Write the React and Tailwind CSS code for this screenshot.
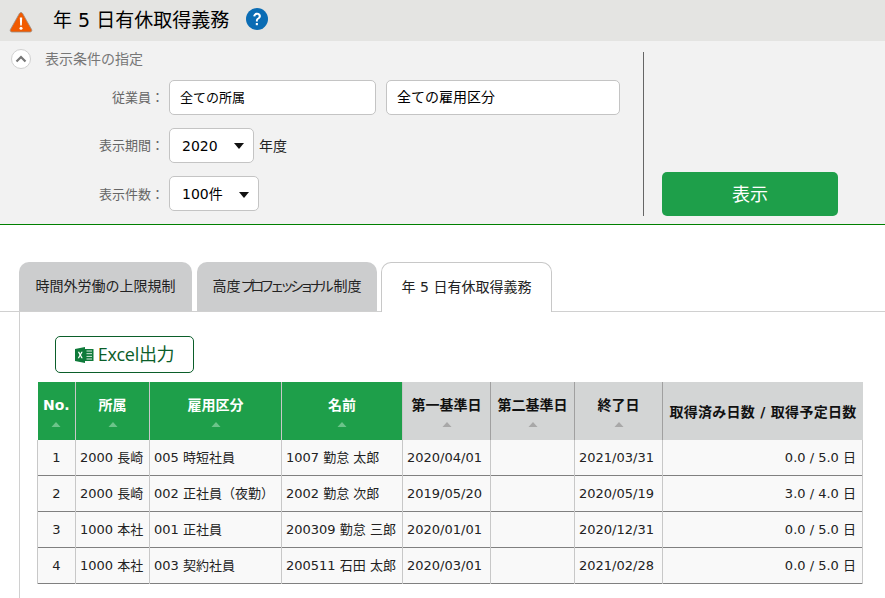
import React from "react";

const FONT = "font-['DejaVu_Sans','Noto_Sans_CJK_JP',sans-serif]";
const Chev = () => (
  <svg width="10" height="6" viewBox="0 0 10 6" className="shrink-0"><path d="M0 0h10L5 6z" fill="#111" /></svg>
);
const Sort = () => (
  <svg width="10" height="5" viewBox="0 0 10 5" className="mx-auto mt-[6px] block"><path d="M5 0l4.500 5h-9z" fill="currentColor" /></svg>
);

const rows = [
  ["1", "2000 長崎", "005 時短社員", "1007 勤怠 太郎", "2020/04/01", "", "2021/03/31", "0.0 / 5.0 日"],
  ["2", "2000 長崎", "002 正社員（夜勤）", "2002 勤怠 次郎", "2019/05/20", "", "2020/05/19", "3.0 / 4.0 日"],
  ["3", "1000 本社", "001 正社員", "200309 勤怠 三郎", "2020/01/01", "", "2020/12/31", "0.0 / 5.0 日"],
  ["4", "1000 本社", "003 契約社員", "200511 石田 太郎", "2020/03/01", "", "2021/02/28", "0.0 / 5.0 日"],
];

const Label = ({ children }) => (
  <div className="w-[169px] shrink-0 pr-[5px] text-right text-[13px] text-[#666]">{children}</div>
);

const Field = ({ w, children }) => (
  <div className={`flex h-[35px] items-center rounded-[5px] border border-[#c4c4c4] bg-white text-black ${w}`}>{children}</div>
);

export default function App() {
  return (
    <div className={`h-[598px] w-[885px] overflow-hidden bg-white ${FONT}`}>
      <header className="flex h-[41px] items-center bg-[#e4e4e2]">
        <svg width="24" height="22" viewBox="0 0 24 22" className="ml-[9px] mt-[2px]">
          <path d="M12 1.500c.7 0 1.200.4 1.600 1l9 16c.6 1.200-.1 2.500-1.500 2.500H2.900c-1.400 0-2.100-1.300-1.500-2.500l9-16c.4-.6.900-1 1.600-1z" fill="#f15a00" stroke="#9a8f86" strokeWidth="0.800" />
          <path d="M10.800 6.500h2.400l-.4 8h-1.600z" fill="#fff" />
          <circle cx="12" cy="17.300" r="1.500" fill="#fff" />
        </svg>
        <h1 className="ml-[20px] text-[19px] font-normal text-black">年 5 日有休取得義務</h1>
        <svg width="22" height="22" viewBox="0 0 22 22" className="ml-[17px] mb-[4px]">
          <circle cx="11" cy="11" r="11" fill="#0a6cb4" />
          <path d="M7.200 8.300c.2-2.200 1.800-3.500 3.900-3.500 2.200 0 3.800 1.300 3.800 3.200 0 1.500-.8 2.300-1.900 3-.9.600-1.200 1-1.200 2v.4H9.900v-.6c0-1.400.5-2.100 1.500-2.800.9-.6 1.300-1 1.300-1.800 0-.8-.6-1.400-1.600-1.400-1.100 0-1.700.7-1.800 1.800z" fill="#fff" />
          <rect x="9.800" y="15" width="2.100" height="2.200" fill="#fff" />
        </svg>
      </header>

      <section className="flex h-[184px] border-b border-[#008000] bg-[#f2f2f2]">
        <div className="w-[643px] shrink-0 pt-[8px]">
          <div className="flex h-[20px] items-center pl-[11px]">
            <span className="flex h-[20px] w-[20px] items-center justify-center rounded-full border border-[#d0d0d0] bg-white">
              <svg width="12" height="8" viewBox="0 0 12 8"><path d="M1.500 6.500L6 2l4.500 4.500" fill="none" stroke="#777" strokeWidth="2.200" /></svg>
            </span>
            <span className="ml-[14px] text-[14px] text-[#777]">表示条件の指定</span>
          </div>
          <div className="mt-[11px] flex items-center">
            <Label>従業員：</Label>
            <Field w="w-[207px] pl-[10px] text-[13px]">全ての所属</Field>
            <Field w="ml-[10px] w-[234px] pl-[10px] text-[14px]">全ての雇用区分</Field>
          </div>
          <div className="mt-[13px] flex items-center">
            <Label>表示期間：</Label>
            <Field w="w-[85px] justify-between pl-[12px] pr-[9px] pt-px text-[14px]"><span>2020</span><Chev /></Field>
            <span className="ml-[5px] pt-px text-[14px] text-[#222]">年度</span>
          </div>
          <div className="mt-[13px] flex items-center">
            <Label><span className="relative top-px">表示件数：</span></Label>
            <Field w="w-[90px] justify-between pl-[12px] pr-[9px] pt-[2px] text-[14px]"><span>100件</span><Chev /></Field>
          </div>
        </div>
        <div className="mt-[11px] mb-[8px] flex flex-1 items-end border-l border-[#666] pl-[18px]">
          <button className="h-[44px] w-[176px] rounded-[5px] bg-[#1e9f4a] text-[18px] text-white">表示</button>
        </div>
      </section>

      <nav className="mt-[37px] flex h-[50px] items-end border-b border-[#d0d0d0] pl-[19px]">
        <div className="flex h-[49px] w-[173px] items-center justify-center rounded-t-[10px] bg-[#cccdce] text-[14px] text-[#222]">時間外労働の上限規制</div>
        <div className="ml-[5px] flex h-[49px] w-[180px] items-center justify-center rounded-t-[10px] bg-[#cccdce] text-[14px] text-[#222]">高度<span className="tracking-[-4.100px]">プロフェッショナル</span><span className="ml-[4px]">制度</span></div>
        <div className="relative top-px ml-[4px] flex h-[50px] w-[171px] items-center justify-center rounded-t-[10px] border border-b-0 border-[#c8c8c8] bg-white text-[14px] text-[#222]">年 5 日有休取得義務</div>
      </nav>

      <main className="ml-[19px] h-[287px] border-l border-[#d0d0d0] pl-[18px] pt-[24px]">
        <button className="ml-[17px] flex h-[37px] w-[139px] items-center justify-center rounded-[5px] border border-[#0b5e2a] bg-white text-[18px] tracking-[-0.300px] text-[#0b5e2a] font-['Open_Sans','Noto_Sans_CJK_JP',sans-serif]">
          <svg width="19" height="16" viewBox="0 0 19 16" className="mr-[4px] shrink-0">
            <path d="M0 2l10-2v16L0 14z" fill="#0f7a3a" />
            <rect x="10" y="2" width="8.500" height="12" fill="#0f7a3a" />
            <path d="M11.500 4h5.500M11.500 6.700h5.500M11.500 9.400h5.500M11.500 12h5.500" stroke="#d9eadd" strokeWidth="1" />
            <path d="M2.800 4.800l1.700 3.100-1.800 3.300h1.400l1.100-2.200 1.100 2.200h1.500L6 7.900l1.700-3.100H6.300l-1 2-1-2z" fill="#fff" />
          </svg>
          Excel出力
        </button>

        <table className="-ml-px mt-[9px] w-[825px] table-fixed border-collapse">
          <colgroup>
            <col className="w-[38px]" /><col className="w-[74px]" /><col className="w-[132px]" /><col className="w-[121px]" />
            <col className="w-[88px]" /><col className="w-[84px]" /><col className="w-[88px]" /><col className="w-[200px]" />
          </colgroup>
          <thead>
            <tr className="h-[58px] text-[14px] font-bold">
              {["No.", "所属", "雇用区分", "名前"].map((h) => (
                <th key={h} className="border-r border-[#c8c8c8] bg-[#1e9f4a] p-0 align-middle text-white">
                  {h}
                  <span className="text-[#6cc48a]"><Sort /></span>
                </th>
              ))}
              {["第一基準日", "第二基準日", "終了日"].map((h) => (
                <th key={h} className="border-r border-[#a0a0a0] bg-[#d3d5d5] p-0 align-middle text-[#111]">
                  {h}
                  <span className="text-[#a8a8a8]"><Sort /></span>
                </th>
              ))}
              <th className="whitespace-nowrap bg-[#d3d5d5] p-0 pr-[6px] pt-[2px] text-right align-middle text-[14px] tracking-[0.280px] text-[#111]">取得済み日数 / 取得予定日数</th>
            </tr>
          </thead>
          <tbody>
            {rows.map((r, ri) => (
              <tr key={r[0]} className={`${ri === 0 ? "h-[35px]" : "h-[36px]"} border-b border-[#808080] bg-[#f9f9f9] text-[13px] text-[#222]`}>
                {r.map((c, i) => (
                  <td
                    key={i}
                    className={`overflow-hidden whitespace-nowrap border-x border-[#c8c8c8] p-0 pt-px ${i === 0 ? "text-center" : i === 7 ? "pr-[6px] text-right" : "pl-[4px]"}`}
                  >
                    {c}
                  </td>
                ))}
              </tr>
            ))}
          </tbody>
        </table>
      </main>
    </div>
  );
}
